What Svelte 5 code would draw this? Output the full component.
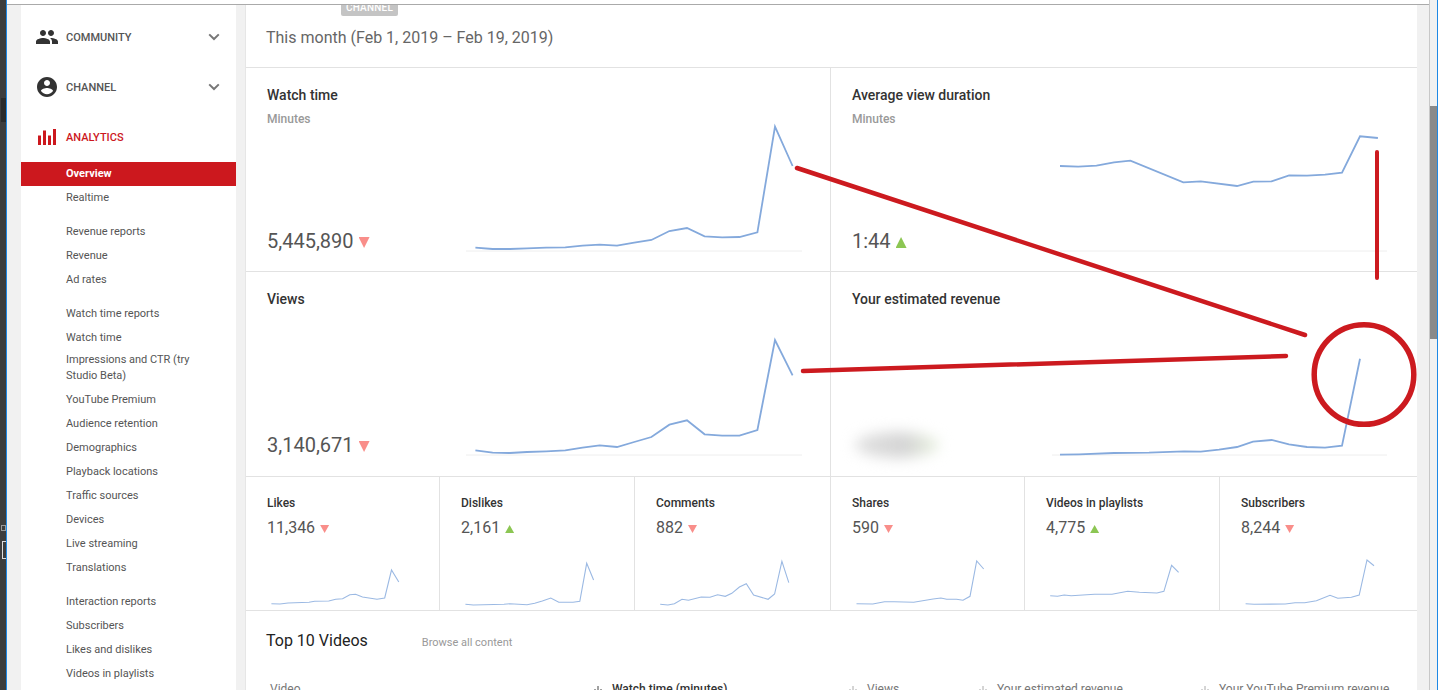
<script>
	// chart points are written in page coordinates, each svg's viewBox picks its own window
	const pts = (xs, ys) => xs.map((x, i) => `${x},${ys[i]}`).join(' ');

	const menu = [
		['Overview', 'Realtime'],
		['Revenue reports', 'Revenue', 'Ad rates'],
		[
			'Watch time reports',
			'Watch time',
			'Impressions and CTR (try Studio Beta)',
			'YouTube Premium',
			'Audience retention',
			'Demographics',
			'Playback locations',
			'Traffic sources',
			'Devices',
			'Live streaming',
			'Translations'
		],
		['Interaction reports', 'Subscribers', 'Likes and dislikes', 'Videos in playlists']
	];

	const bigCards = [
		{
			title: 'Watch time',
			sub: 'Minutes',
			value: '5,445,890',
			dir: 'down',
			left: 246,
			top: 68,
			h: 203,
			base: [466, 802, 251],
			line: pts(
				[475.4, 492.6, 509.8, 527, 546.2, 565.3, 582.5, 599.7, 617, 634.2, 651.4, 669.4, 687, 704.6, 722.2, 739.4, 757.4, 775, 792.6],
				[247.7, 249, 249, 248.3, 247.7, 247.3, 245.7, 244.7, 245.7, 242.7, 240, 231, 228, 236.3, 237.3, 237, 232.3, 126.7, 166]
			)
		},
		{
			title: 'Average view duration',
			sub: 'Minutes',
			value: '1:44',
			dir: 'up',
			left: 831,
			top: 68,
			h: 203,
			base: [1060, 1387, 251],
			line: pts(
				[1060, 1078.2, 1096.5, 1114, 1130.4, 1183.3, 1200.8, 1237, 1253.3, 1271.6, 1289.1, 1307, 1325, 1342, 1360, 1377.9],
				[166, 166.7, 165.7, 162.3, 160.7, 182.3, 181.3, 186, 181.7, 181.3, 175.3, 175.7, 174.7, 172.7, 136.3, 138]
			)
		},
		{
			title: 'Views',
			value: '3,140,671',
			dir: 'down',
			left: 246,
			top: 272,
			h: 204,
			base: [466, 802, 455],
			line: pts(
				[475.4, 492.6, 509.8, 527, 546.2, 565.3, 582.5, 599.7, 617, 634.2, 651.4, 669.4, 687, 704.6, 722.2, 739.4, 757.4, 775, 792.6],
				[450.3, 452.7, 453, 452, 451.3, 450.3, 447.7, 445.3, 447, 442, 437, 424.7, 420.3, 434.3, 435.7, 435.7, 430, 340, 375.3]
			)
		},
		{
			title: 'Your estimated revenue',
			blurred: true,
			left: 831,
			top: 272,
			h: 204,
			base: [1052, 1387, 455],
			line: pts(
				[1060, 1079, 1114, 1149, 1184, 1200.8, 1219, 1237, 1253, 1271.6, 1289, 1307, 1325, 1342, 1360],
				[454.7, 454.3, 453, 452.7, 451.3, 451.7, 449.7, 447, 441.7, 440, 444.3, 447, 447.7, 445.7, 358.7]
			)
		}
	];

	const smallCards = [
		{
			title: 'Likes',
			value: '11,346',
			dir: 'down',
			left: 246,
			w: 193,
			line: pts(
				[271.4, 280, 288, 309, 314.6, 328.8, 335.7, 342.6, 349.8, 355.6, 362.5, 377, 384.7, 391.5, 398.8],
				[603.7, 604, 603, 602.3, 601.3, 601, 599.3, 598.7, 594.7, 594.3, 597, 599.3, 598, 570, 582]
			)
		},
		{
			title: 'Dislikes',
			value: '2,161',
			dir: 'up',
			left: 440,
			w: 194,
			line: pts(
				[465.4, 473.4, 504, 509.8, 527, 534.7, 542.3, 550.8, 558.8, 573, 579.8, 586.7, 593.6],
				[604.3, 605, 604.3, 603.7, 604.7, 603.3, 601, 598, 602.3, 602.3, 601.3, 563.3, 580]
			)
		},
		{
			title: 'Comments',
			value: '882',
			dir: 'down',
			left: 635,
			w: 195,
			line: pts(
				[660.2, 667.9, 674.4, 682, 688.5, 701.2, 710, 717.6, 725.3, 731.8, 739.4, 746.3, 753.6, 768.1, 774.6, 781.9, 788.8],
				[604.3, 605, 603.7, 599.3, 600.3, 597, 597.3, 594.7, 596.3, 593.3, 587, 583.7, 595, 599.3, 594, 561.3, 582.7]
			)
		},
		{
			title: 'Shares',
			value: '590',
			dir: 'down',
			left: 831,
			w: 193,
			line: pts(
				[856.5, 872.8, 884.5, 894.2, 913.7, 933.1, 940.9, 946.7, 956.5, 963, 970, 976.7, 983.7],
				[603.7, 604, 601.7, 601.7, 602.3, 599, 598, 599.3, 599.3, 600.3, 596.3, 561, 569]
			)
		},
		{
			title: 'Videos in playlists',
			value: '4,775',
			dir: 'up',
			left: 1025,
			w: 194,
			line: pts(
				[1050.2, 1057.6, 1064.2, 1071.2, 1094.6, 1112, 1127.7, 1139.4, 1156.9, 1163.9, 1171.6, 1178.6],
				[595.7, 596.3, 595, 595.7, 594.3, 594.3, 591.3, 592.3, 593, 591.3, 565.3, 572.3]
			)
		},
		{
			title: 'Subscribers',
			value: '8,244',
			dir: 'down',
			left: 1220,
			w: 197,
			line: pts(
				[1245.6, 1254.1, 1285.3, 1295, 1304.7, 1316.4, 1330, 1337.8, 1351.4, 1359.2, 1367, 1374],
				[603.7, 604.3, 604, 602.7, 602.7, 600.7, 595.3, 598.3, 597.3, 595, 560, 565.7]
			)
		}
	];

	const sortCols = ['Watch time (minutes)', 'Views', 'Your estimated revenue', 'Your YouTube Premium revenue'];
</script>

<div class="window">
	<div class="desk">
		<span class="desk-tab"></span>
		<span class="desk-mini"></span>
		<span class="desk-box"></span>
	</div>

	<div class="page">
		<div class="topbar"></div>
		<div class="content">
			<aside class="side">
				<div class="sec">
					<svg class="ic" viewBox="0 0 24 24"><path fill="#333" d="M16 11c1.66 0 2.99-1.34 2.99-3S17.66 5 16 5c-1.66 0-3 1.34-3 3s1.34 3 3 3zm-8 0c1.66 0 2.99-1.34 2.99-3S9.66 5 8 5C6.34 5 5 6.34 5 8s1.34 3 3 3zm0 2c-2.33 0-7 1.17-7 3.5V19h14v-2.5c0-2.33-4.67-3.5-7-3.5zm8 0c-.29 0-.62.02-.97.05 1.16.84 1.97 1.97 1.97 3.45V19h6v-2.5c0-2.33-4.67-3.5-7-3.5z" /></svg>
					<span class="sec-label">COMMUNITY</span>
					<svg class="chev" viewBox="0 0 12 8"><path d="M1.2 1.4 6 6l4.8-4.6" fill="none" stroke="#777" stroke-width="2" /></svg>
				</div>
				<div class="sec">
					<svg class="ic" viewBox="0 0 24 24"><path fill="#333" d="M12 2C6.48 2 2 6.48 2 12s4.48 10 10 10 10-4.48 10-10S17.52 2 12 2zm0 3c1.66 0 3 1.34 3 3s-1.34 3-3 3-3-1.34-3-3 1.34-3 3-3zm0 14.2c-2.5 0-4.71-1.28-6-3.22.03-1.99 4-3.08 6-3.08 1.99 0 5.97 1.09 6 3.08-1.29 1.94-3.5 3.22-6 3.22z" /></svg>
					<span class="sec-label">CHANNEL</span>
					<svg class="chev" viewBox="0 0 12 8"><path d="M1.2 1.4 6 6l4.8-4.6" fill="none" stroke="#777" stroke-width="2" /></svg>
				</div>
				<div class="sec active">
					<svg class="ic" viewBox="0 0 24 24">
						<path fill="#cc181e" d="M3 10.5h3V20H3zM8 5.6h3V20H8zM13 10.5h3V20h-3zM18 4h3v16h-3z" />
					</svg>
					<span class="sec-label">ANALYTICS</span>
				</div>

				{#each menu as group}
					<ul class="group">
						{#each group as item}
							<li class:current={item === 'Overview'} class:wrapped={item.length > 30}>{item}</li>
						{/each}
					</ul>
				{/each}
			</aside>

			<main class="main">
				<header class="head">
					<div class="title-row">
						<h1>My</h1>
						<span class="badge">CHANNEL</span>
					</div>
					<p class="range">This month (Feb 1, 2019 – Feb 19, 2019)</p>
				</header>

				<section class="bigs">
					{#each bigCards as c}
						<article class="big">
							<div class="big-text">
								<div class="big-head">
									<h3>{c.title}</h3>
									{#if c.sub}<p class="sub">{c.sub}</p>{/if}
								</div>
								{#if c.blurred}
									<div class="smudge"></div>
								{:else}
									<p class="big-val">{c.value}<i class="tri {c.dir}"></i></p>
								{/if}
							</div>
							<svg width="366" height={c.h} viewBox="{c.left + 220} {c.top} 366 {c.h}">
								<line x1={c.base[0]} x2={c.base[1]} y1={c.base[2]} y2={c.base[2]} stroke="#eeeeee" />
								<polyline points={c.line} fill="none" stroke="#84a9dc" stroke-width="1.8" />
							</svg>
						</article>
					{/each}
				</section>

				<section class="smalls">
					{#each smallCards as c}
						<article class="small">
							<div class="small-text">
								<h4>{c.title}</h4>
								<p class="small-val">{c.value}<i class="tri mini {c.dir}"></i></p>
							</div>
							<svg width={c.w} height="72" viewBox="{c.left} 538 {c.w} 72">
								<polyline points={c.line} fill="none" stroke="#9bb9e3" stroke-width="1.1" />
							</svg>
						</article>
					{/each}
				</section>

				<section class="top">
					<div class="top-head">
						<h2>Top 10 Videos</h2>
						<span class="browse">Browse all content</span>
					</div>
					<div class="thead">
						<span>Video</span>
						{#each sortCols as col, i}
							<span class="sort" class:on={i === 0}>
								<svg class="arrow" viewBox="0 0 10 12"><path d="M5 3v8M1.5 6 5 9.5 8.5 6" fill="none" stroke={i === 0 ? '#444' : '#aaa'} /></svg>
								{col}
							</span>
						{/each}
					</div>
				</section>
			</main>
		</div>
	</div>

	<div class="scroll"><div class="thumb"></div></div>
	<div class="edge"></div>

	<!-- red marks drawn on top of the screenshot -->
	<svg class="marks" width="1440" height="690" viewBox="0 0 1440 690">
		<g fill="none" stroke="#cc1a1f" stroke-linecap="round">
			<path d="M797 168 1305 335" stroke-width="4.5" />
			<path d="M803 371 1286 356" stroke-width="4.5" />
			<path d="M1377 152V278" stroke-width="4" />
			<ellipse cx="1364" cy="374.5" rx="49.8" ry="49.8" stroke-width="5.5" />
		</g>
	</svg>
</div>

<style>
	:global(body) {
		margin: 0;
		overflow: hidden;
		background: #fff;
	}
	.window {
		position: relative;
		display: flex;
		width: 1440px;
		height: 690px;
		overflow: hidden;
		font-family: Roboto, 'Liberation Sans', sans-serif;
		color: #222;
	}
	h1,
	h2,
	h3,
	h4,
	p,
	ul {
		margin: 0;
		padding: 0;
	}

	/* ---------- what's left of the window behind ---------- */
	.desk {
		position: relative;
		flex: 0 0 6px;
		background: #3d3d3d;
		border-right: 1px solid #1e88e5;
	}
	.desk-tab {
		position: absolute;
		top: 98px;
		left: 1px;
		width: 5px;
		height: 24px;
		background: #2b2b2b;
	}
	.desk-mini {
		position: absolute;
		top: 525px;
		left: 1px;
		width: 5px;
		height: 6px;
		border: 1px solid #999;
		box-sizing: border-box;
	}
	.desk-box {
		position: absolute;
		top: 541px;
		left: 2px;
		width: 4px;
		height: 18px;
		border: 1px solid #ddd;
		border-right: 0;
		box-sizing: border-box;
	}
	.edge {
		flex: 0 0 1px;
		background: #1e88e5;
	}

	.page {
		display: flex;
		flex-direction: column;
		flex: 0 0 1422px;
	}
	.topbar {
		flex: 0 0 4px;
		background: #fff;
		border-bottom: 1px solid #aaa;
	}
	.content {
		display: flex;
		flex: 1;
		min-height: 0;
		padding-left: 14px;
		background: #f1f1f1;
	}

	/* ---------- sidebar ---------- */
	.side {
		flex: 0 0 215px;
		padding-top: 7px;
		background: #fff;
		font-size: 11px;
		color: #555;
	}
	.sec {
		display: flex;
		align-items: center;
		height: 50px;
		padding-left: 14px;
		font-weight: 500;
		color: #555;
	}
	.sec.active {
		color: #cc181e;
	}
	.ic {
		width: 24px;
		height: 24px;
		margin-right: 7px;
	}
	.sec-label {
		flex: 1;
	}
	.chev {
		width: 12px;
		height: 8px;
		margin-right: 16px;
	}
	.group {
		list-style: none;
		margin-bottom: 10px;
	}
	.group li {
		padding: 0 40px 0 45px;
		line-height: 24px;
	}
	.group li.current {
		background: #cc181e;
		color: #fff;
		font-weight: 700;
	}
	.group li.wrapped {
		padding-top: 2px;
		padding-bottom: 4px;
		line-height: 16px;
	}

	/* ---------- main column ---------- */
	.main {
		flex: 0 0 1171px;
		margin-left: 9px;
		border-left: 1px solid #e6e6e6;
		background: #fff;
		overflow: hidden;
	}
	/* page is scrolled a little: the title row sits above the fold */
	.head {
		display: flow-root;
		height: 62px;
		padding-left: 20px;
		border-bottom: 1px solid #e2e2e2;
	}
	.title-row {
		display: flex;
		align-items: flex-start;
		height: 20px;
		margin-top: -9px;
	}
	.title-row h1 {
		margin-top: -14px;
		width: 75px;
		font-size: 20px;
		font-weight: 400;
		line-height: 24px;
	}
	.badge {
		width: 57px;
		height: 20px;
		background: #c4c4c4;
		border-radius: 2px;
		color: #fff;
		font-size: 10px;
		font-weight: 500;
		line-height: 24px;
		text-align: center;
		letter-spacing: 0.2px;
	}
	.range {
		margin-top: 12px;
		font-size: 16px;
		line-height: 20px;
		color: #666;
	}

	.bigs {
		display: grid;
		grid-template-columns: 585px 586px;
		grid-template-rows: 204px 205px;
	}
	.big {
		display: grid;
		grid-template-columns: 199px 1fr;
		padding: 0 0 0 21px;
		border-bottom: 1px solid #e2e2e2;
		overflow: hidden;
	}
	.big:nth-child(odd) {
		border-right: 1px solid #e2e2e2;
	}
	.big-text {
		padding-top: 17px;
	}
	.big-head {
		height: 143px;
	}
	h3 {
		font-size: 14px;
		font-weight: 500;
		line-height: 20px;
		color: #333;
	}
	.sub {
		margin-top: 5px;
		font-size: 12px;
		font-weight: 500;
		line-height: 18px;
		color: #999;
	}
	.big-val {
		display: flex;
		align-items: center;
		font-size: 20px;
		line-height: 26px;
		color: #555;
	}
	.tri {
		width: 11px;
		height: 11px;
		margin: 3px 0 0 5px;
	}
	.tri.mini {
		width: 9px;
		height: 8px;
		margin-top: 2px;
	}
	.tri.down {
		background: #f98e8a;
		clip-path: polygon(0 0, 100% 0, 50% 100%);
	}
	.tri.up {
		background: #8cc653;
		clip-path: polygon(50% 0, 100% 100%, 0 100%);
	}
	.smudge {
		width: 84px;
		height: 26px;
		margin: 0 0 0 3px;
		border-radius: 50%;
		background: linear-gradient(90deg, #e0e0e0, #d4d4d4 60%, #e2e8dc 85%, #e6f0dc);
		filter: blur(7px);
	}

	.smalls {
		display: grid;
		grid-template-columns: 194px 195px 196px 194px 195px 197px;
		height: 134px;
		border-bottom: 1px solid #e2e2e2;
		box-sizing: border-box;
	}
	.small {
		overflow: hidden;
	}
	.small:not(:last-child) {
		border-right: 1px solid #e2e2e2;
	}
	.small svg {
		display: block;
	}
	.small-text {
		height: 61px;
		padding: 16px 0 0 21px;
		box-sizing: border-box;
	}
	h4 {
		font-size: 12px;
		font-weight: 500;
		line-height: 20px;
		color: #333;
	}
	.small-val {
		display: flex;
		align-items: center;
		margin-top: 4px;
		font-size: 16px;
		line-height: 22px;
		color: #555;
	}

	.top {
		padding: 20px 0 0 20px;
	}
	.top-head {
		display: flex;
		align-items: baseline;
		gap: 54px;
	}
	h2 {
		font-size: 16px;
		font-weight: 400;
		line-height: 20px;
		color: #222;
	}
	.browse {
		font-size: 11px;
		color: #999;
	}
	.thead {
		display: grid;
		grid-template-columns: 323px 255px 130px 222px auto;
		margin-top: 30px;
		padding-left: 4px;
		font-size: 12px;
		line-height: 16px;
		color: #777;
	}
	.sort {
		display: flex;
		align-items: center;
		gap: 9px;
	}
	.sort.on {
		font-weight: 500;
		color: #333;
	}
	.arrow {
		width: 10px;
		height: 12px;
	}

	/* ---------- scrollbar ---------- */
	.scroll {
		flex: 0 0 8px;
		padding-top: 106px;
		background: #f1f1f1;
		border-left: 1px solid #c8c8c8;
		box-sizing: border-box;
	}
	.thumb {
		height: 233px;
		background: #8a8a8a;
	}

	.marks {
		position: absolute;
		inset: 0;
		pointer-events: none;
	}
</style>
